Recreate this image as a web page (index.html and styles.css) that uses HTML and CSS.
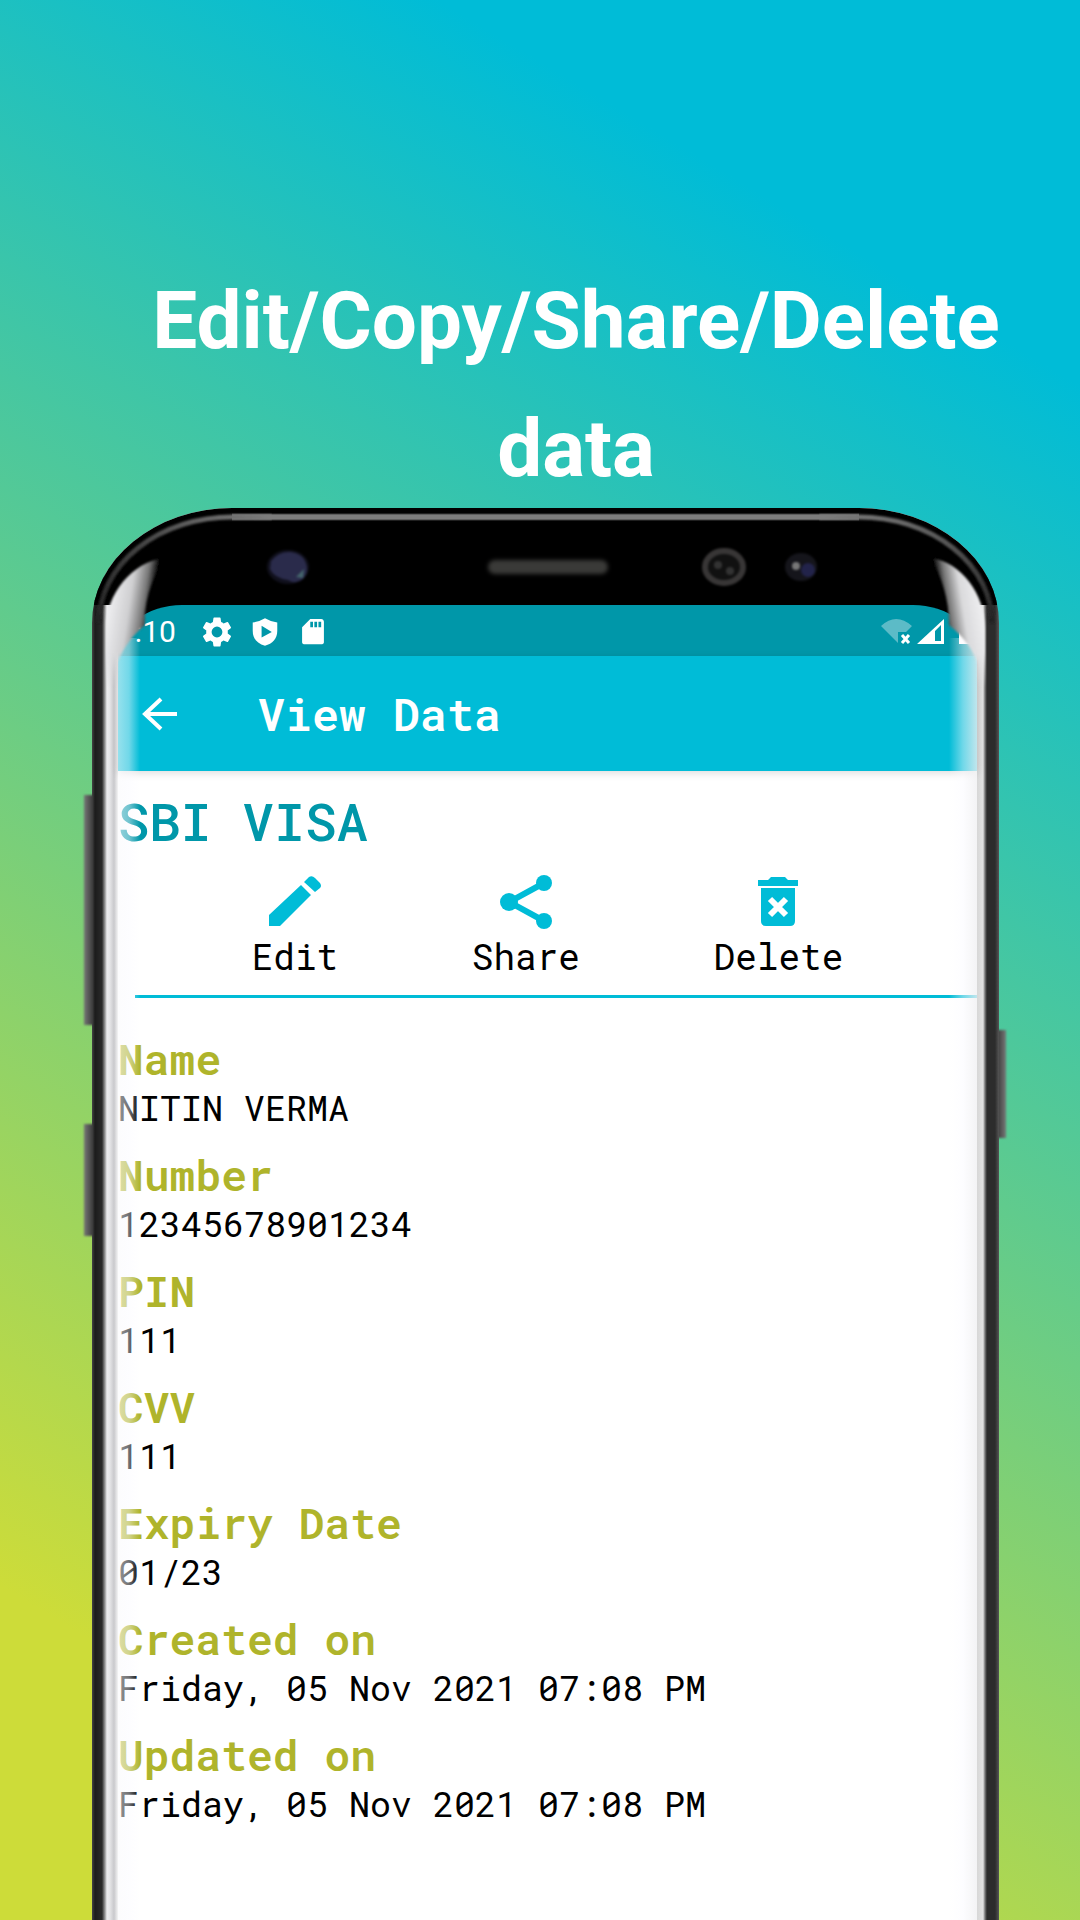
FILE: index.html
```html
<!DOCTYPE html>
<html lang="en">
<head>
<meta charset="utf-8">
<meta name="viewport" content="width=device-width, initial-scale=1">
<title>View Data</title>
<link rel="stylesheet" href="styles.css">
</head>
<body>
<main class="promo">
  <h1 class="headline">Edit/Copy/Share/Delete data</h1>

  <section class="phone">
    <span class="side-key side-key-volume"></span>
    <span class="side-key side-key-assist"></span>
    <span class="side-key side-key-power"></span>

    <div class="shell">
      <div class="bezel">
        <svg class="sensor" width="44" height="36" viewBox="0 0 44 36" aria-hidden="true">
          <ellipse cx="22" cy="18" rx="21" ry="17" fill="#10101c"/>
          <path d="M5 12Q13 2 25 3Q36 5 39 12Q44 22 37 30Q30 36 22 31Q8 29 4 20Z" fill="#2a2b4b"/>
          <path d="M30 28L38 20L37 29Z" fill="#44656c"/>
        </svg>
        <span class="speaker"></span>
        <svg class="iris" width="46" height="42" viewBox="0 0 46 42" aria-hidden="true">
          <ellipse cx="23" cy="21" rx="19" ry="16" fill="#111" stroke="#383636" stroke-width="6"/>
          <circle cx="17" cy="19" r="4" fill="#333"/><circle cx="29" cy="25" r="4" fill="#333"/>
        </svg>
        <svg class="camera" width="36" height="32" viewBox="0 0 36 32" aria-hidden="true">
          <ellipse cx="18" cy="16" rx="16" ry="14" fill="#15151b"/>
          <circle cx="25" cy="19" r="7" fill="#22234a"/><circle cx="13" cy="15" r="4" fill="#777"/>
        </svg>
      </div>

      <div class="screen">
        <div class="status-bar">
          <span class="clock">7:10</span>
          <svg width="30" height="30" viewBox="2 2 20 20" fill="#fff" aria-hidden="true"><path d="M19.14 12.94c.04-.3.06-.61.06-.94 0-.32-.02-.64-.07-.94l2.03-1.58a.49.49 0 0 0 .12-.61l-1.92-3.32a.49.49 0 0 0-.59-.22l-2.39.96a7 7 0 0 0-1.62-.94l-.36-2.54a.48.48 0 0 0-.48-.41h-3.84a.48.48 0 0 0-.47.41l-.36 2.54c-.59.24-1.13.57-1.62.94l-2.39-.96a.48.48 0 0 0-.59.22L2.74 8.87a.48.48 0 0 0 .12.61l2.03 1.58c-.05.3-.09.63-.09.94s.02.64.07.94l-2.03 1.58a.49.49 0 0 0-.12.61l1.92 3.32c.12.22.37.29.59.22l2.39-.96c.5.38 1.03.7 1.62.94l.36 2.54c.05.24.24.41.48.41h3.84c.24 0 .44-.17.47-.41l.36-2.54a7 7 0 0 0 1.62-.94l2.39.96c.22.08.47 0 .59-.22l1.92-3.32a.48.48 0 0 0-.12-.61zM12 15.6A3.6 3.6 0 1 1 12 8.400a3.600 3.600 0 0 1 0 7.200z"/></svg>
          <svg width="30" height="30" viewBox="1 1 22 22" fill="#fff" fill-rule="evenodd" aria-hidden="true"><path d="M12 2Q8 4.500 3 5V11C3 17 6.500 20.500 12 22C17.500 20.500 21 17 21 11V5Q16 4.500 12 2ZM9.500 7.500V16L17 12Z"/></svg>
          <svg width="30" height="30" viewBox="1 1 22 22" fill="#fff" fill-rule="evenodd" aria-hidden="true"><path d="M18 2.500H10L4 8.500V19.500C4 20.600 4.900 21 6 21H18C19.100 21 20 20.600 20 19.500V4.500C20 3.400 19.100 2.500 18 2.500ZM10 4.500H12V8.500H10ZM13 4.500H15V8.500H13ZM16 4.500H18V8.500H16Z"/></svg>
          <span class="status-spacer"></span>
          <svg class="wifi" width="32" height="28" viewBox="0 0 32 28" aria-hidden="true">
            <path d="M0 8Q15 -6 31 8L25 14H17V25Z" fill="#5cbbc7"/>
            <path d="M21 17L28 25M28 17L21 25" stroke="#fff" stroke-width="3"/>
          </svg>
          <svg width="28" height="28" viewBox="0 0 28 28" aria-hidden="true">
            <path fill-rule="evenodd" fill="#fff" d="M0 26L27 1V26ZM18 13V23H24V7Z"/>
          </svg>
          <svg class="battery" width="14" height="28" viewBox="0 0 14 28" aria-hidden="true"><path d="M0 4H14V26H0Z" fill="#fff"/></svg>
        </div>

        <header class="app-bar">
          <button class="back" type="button" aria-label="Back">
            <svg width="36" height="34" viewBox="0 0 36 34" fill="none" stroke="#fff" stroke-width="4" aria-hidden="true"><path d="M35 17H3M19 2L3 17L19 32"/></svg>
          </button>
          <h2 class="app-title">View Data</h2>
        </header>

        <div class="content">
          <h3 class="record-title">SBI VISA</h3>
          <div class="actions">
            <button class="action" type="button">
              <svg width="54" height="54" viewBox="0 0 54 54" fill="#00bcd7" aria-hidden="true"><path d="M1 51V40L33 10L43 20L12 51ZM36 7L41 2Q44 0 47 3L52 8Q54 11 52 13L47 17Z"/></svg>
              <span>Edit</span>
            </button>
            <button class="action" type="button">
              <svg width="54" height="54" viewBox="0 0 54 54" aria-hidden="true"><path d="M45 8L10 27L45 46" fill="none" stroke="#00bcd7" stroke-width="6"/><g fill="#00bcd7"><circle cx="45" cy="8" r="8"/><circle cx="10" cy="27" r="9"/><circle cx="45" cy="46" r="8"/></g></svg>
              <span>Share</span>
            </button>
            <button class="action" type="button">
              <svg width="54" height="54" viewBox="0 0 54 54" aria-hidden="true"><path d="M7 5H17L20 2H34L37 5H47V11H7ZM10 13H44V46Q44 51 39 51H15Q10 51 10 46Z" fill="#00bcd7"/><path d="M19 24L35 40M35 24L19 40" stroke="#fff" stroke-width="6"/></svg>
              <span>Delete</span>
            </button>
          </div>
          <hr class="divider">
          <dl class="fields">
            <div class="field"><dt>Name</dt><dd>NITIN VERMA</dd></div>
            <div class="field"><dt>Number</dt><dd>12345678901234</dd></div>
            <div class="field"><dt>PIN</dt><dd>111</dd></div>
            <div class="field"><dt>CVV</dt><dd>111</dd></div>
            <div class="field"><dt>Expiry Date</dt><dd>01/23</dd></div>
            <div class="field"><dt>Created on</dt><dd>Friday, 05 Nov 2021 07:08 PM</dd></div>
            <div class="field"><dt>Updated on</dt><dd>Friday, 05 Nov 2021 07:08 PM</dd></div>
          </dl>
        </div>
      </div>

      <span class="glare glare-left"></span>
      <span class="glare glare-right"></span>
      <svg class="corner corner-left" width="180" height="180" viewBox="0 0 180 180" aria-hidden="true">
        <defs>
          <linearGradient id="glossLeft" gradientUnits="userSpaceOnUse" x1="14" y1="95" x2="60" y2="102">
            <stop offset="0" stop-color="#f2f2f4"/><stop offset=".5" stop-color="#cfcfd1"/><stop offset=".8" stop-color="#777"/><stop offset="1" stop-color="#000"/>
          </linearGradient>
          <linearGradient id="rimLeft" x1="0" y1="1" x2="1" y2="0">
            <stop offset="0" stop-color="#222"/><stop offset=".5" stop-color="#444"/><stop offset="1" stop-color="#7c7c7c"/>
          </linearGradient>
          <linearGradient id="fade" x1="0" y1="0" x2="0" y2="1">
            <stop offset="0" stop-color="#fff"/><stop offset=".8" stop-color="#fff"/><stop offset="1" stop-color="#000"/>
          </linearGradient>
          <mask id="glossMask"><rect width="180" height="180" fill="url(#fade)"/></mask>
          <filter id="soft" x="-20%" y="-20%" width="140%" height="140%"><feGaussianBlur stdDeviation="1"/></filter>
        </defs>
        <path d="M7 115A133 106 0 0 1 140 9H180" fill="none" stroke="url(#rimLeft)" stroke-width="5" filter="url(#soft)"/>
        <g mask="url(#glossMask)"><path d="M72 50C40 54 14 86 14 120V180H26V154C31 140 40 128 53 117C52 90 62 68 72 50Z" fill="url(#glossLeft)" filter="url(#soft)"/></g>
      </svg>
      <svg class="corner corner-right" width="180" height="180" viewBox="0 0 180 180" aria-hidden="true">
        <defs>
          <linearGradient id="glossRight" gradientUnits="userSpaceOnUse" x1="166" y1="95" x2="122" y2="102">
            <stop offset="0" stop-color="#f2f2f4"/><stop offset=".5" stop-color="#dadadc"/><stop offset=".8" stop-color="#777"/><stop offset="1" stop-color="#000"/>
          </linearGradient>
          <linearGradient id="rimRight" x1="1" y1="1" x2="0" y2="0">
            <stop offset="0" stop-color="#222"/><stop offset=".5" stop-color="#555"/><stop offset="1" stop-color="#7c7c7c"/>
          </linearGradient>
        </defs>
        <path d="M173 115A133 106 0 0 0 40 9H0" fill="none" stroke="url(#rimRight)" stroke-width="5" filter="url(#soft)"/>
        <g mask="url(#glossMask)"><path d="M112 50C142 54 166 86 166 120V180H158V154C154 142 146 130 130 117C130 90 122 68 112 50Z" fill="url(#glossRight)" filter="url(#soft)"/></g>
      </svg>
    </div>
  </section>
</main>
</body>
</html>
```
FILE: styles.css
```css
* { box-sizing: border-box; }

body {
  margin: 0;
  font-family: "Roboto Mono", "DejaVu Sans Mono", monospace;
  color: #000;
}

h1, h2, h3, dl, dd { margin: 0; }

button {
  padding: 0;
  border: 0;
  background: none;
  font: inherit;
  color: inherit;
}

svg { display: block; flex: none; }

.promo {
  display: flex;
  flex-direction: column;
  min-height: 100vh;
  overflow: hidden;
  background: linear-gradient(211deg, #00bcd7 15%, #cddc39 87%);
}

.headline {
  margin-bottom: -5px;
  padding: 257px 0 0 72px;
  font-family: Roboto, "Noto Sans", sans-serif;
  font-size: 80px;
  font-weight: 700;
  line-height: 128px;
  text-align: center;
  color: #fff;
}

.phone {
  position: relative;
  display: flex;
  flex: 1;
  margin: 0 81px 0 92px;
}

.shell {
  position: relative;
  display: flex;
  flex: 1;
  flex-direction: column;
  min-width: 0;
  overflow: hidden;
  border-radius: 140px 140px 0 0 / 115px 115px 0 0;
  background:
    linear-gradient(90deg, #444 0, #1c1c1c 3px, #2a2a2a 10px, #999 13px, #ededef 15px, #e4e4e6 18px, #c9c9cc 22px, #fff 27px) left / 40px 100% no-repeat,
    linear-gradient(270deg, #555 0, #2c2c2c 4px, #2c2c2c 12px, #777 14px, #e2e2e2 16px, #d3d3d3 24px, #fff 30px) right / 40px 100% no-repeat,
    #fff;
}

.bezel {
  display: flex;
  flex: none;
  align-items: center;
  height: 97px;
  padding: 20px 180px 0 174px;
  background:
    linear-gradient(#000 5px, #7c7c7c 7px, #7c7c7c 11px, #000 13px) center / calc(100% - 280px) 100% no-repeat,
    #000;
}

.speaker {
  width: 120px;
  height: 14px;
  margin: 0 auto 0 178px;
  border-radius: 7px;
  background: #3a3a38;
  filter: blur(2px);
}

.sensor, .iris, .camera { filter: blur(1px); }

.iris { margin-right: 36px; }

.screen {
  flex: 1;
  margin: 0 22px 0 26px;
  background: #fff;
}

/* Black backing shows behind the rounded upper corners of the display. */
.status-bar {
  display: flex;
  align-items: center;
  gap: 18px;
  height: 51px;
  padding: 2px 4px 0 0;
  border-radius: 64px 64px 0 0 / 50px 50px 0 0;
  background: #0097a9;
  box-shadow: 0 -26px 0 26px #000;
  clip-path: inset(0);
  color: #fff;
  font-family: Roboto, sans-serif;
  font-size: 30px;
}

.clock { margin-right: 8px; }

.status-spacer { flex: 1; }

.wifi { margin-right: -14px; }

.battery { margin-left: -4px; }

.app-bar {
  position: relative;
  display: flex;
  align-items: center;
  gap: 80px;
  height: 115px;
  padding-left: 24px;
  background: #00bcd7;
  color: #fff;
  box-shadow: 0 2px 8px rgba(0, 0, 0, .14);
}

.app-title {
  font-size: 45px;
  font-weight: 600;
  line-height: 60px;
}

.record-title {
  padding-top: 14px;
  font-size: 52px;
  font-weight: 500;
  line-height: 72px;
  color: #0097a9;
}

.actions {
  display: flex;
  justify-content: space-evenly;
  padding-top: 18px;
}

.action {
  display: flex;
  flex-direction: column;
  align-items: center;
  font-size: 36px;
  line-height: 54px;
}

.divider {
  height: 3px;
  margin: 12px 0 0 17px;
  border: 0;
  background: #00bcd7;
}

.fields { padding-top: 30px; }

.field { height: 116px; }

.field dt {
  font-size: 43px;
  font-weight: 600;
  line-height: 62px;
  color: #afb42b;
}

.field dd {
  font-size: 35px;
  line-height: 35px;
  white-space: nowrap;
}

.glare {
  position: absolute;
  top: 130px;
  bottom: 0;
  pointer-events: none;
}

.glare-left {
  left: 26px;
  width: 22px;
  background: linear-gradient(90deg, rgba(250, 250, 252, .6), rgba(250, 250, 255, .45) 50%, rgba(250, 250, 255, 0));
}

.glare-right {
  right: 22px;
  width: 28px;
  background: linear-gradient(270deg, rgba(240, 240, 242, .8), rgba(250, 250, 255, .45) 50%, rgba(250, 250, 255, 0));
}

.corner {
  position: absolute;
  top: 0;
  pointer-events: none;
}

.corner-left { left: 0; }

.corner-right { right: 0; }

.side-key {
  position: absolute;
  width: 10px;
  background: linear-gradient(90deg, #777, #333);
  filter: blur(1px);
}

.side-key-volume { left: -8px; top: 287px; height: 230px; }

.side-key-assist { left: -8px; top: 616px; height: 112px; }

.side-key-power {
  top: 522px;
  right: -7px;
  height: 108px;
  background: linear-gradient(270deg, #777, #333);
}
```
